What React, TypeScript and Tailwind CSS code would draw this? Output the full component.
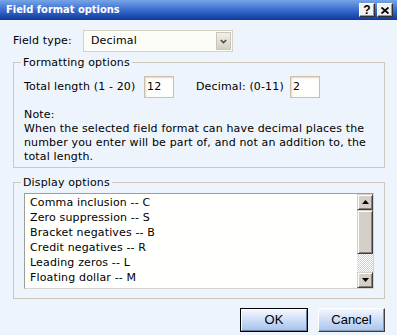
import React from "react";

function ScrollBtn({ dir }: { dir: "up" | "down" }) {
  return (
    <div className="h-[16px] w-[16px] flex items-center justify-center bg-[#d4d0c8] border border-t-[#d4d0c8] border-l-[#d4d0c8] border-r-[#404040] border-b-[#404040] shadow-[inset_1px_1px_#ffffff,inset_-1px_-1px_#808080]">
      <svg width="7" height="4" viewBox="0 0 7 4">
        {dir === "up" ? (
          <path d="M3.5 0 L7 4 L0 4 Z" fill="#000" />
        ) : (
          <path d="M0 0 L7 0 L3.5 4 Z" fill="#000" />
        )}
      </svg>
    </div>
  );
}

const items = [
  "Comma inclusion -- C",
  "Zero suppression -- S",
  "Bracket negatives -- B",
  "Credit negatives -- R",
  "Leading zeros -- L",
  "Floating dollar -- M",
  "Non-floating dollar -- N",
];

export default function App() {
  return (
    <div className="w-[397px] h-[335px] overflow-hidden bg-[#eef4fc] flex flex-col font-['DejaVu_Sans',sans-serif] text-[11px] tracking-[0.15px] text-black">
      {/* Title bar */}
      <div className="h-[20px] flex items-center pl-[6px] pr-[4px] bg-gradient-to-b from-[#78a5e8] via-[#3a6cce] to-[#0b389c]">
        <span className="flex-1 font-['DejaVu_Sans_Condensed','DejaVu_Sans',sans-serif] font-bold text-[11px] tracking-normal text-white leading-[20px] whitespace-nowrap">
          Field format options
        </span>
        <div className="flex gap-[2px]">
          <div className="w-[16px] h-[14px] flex items-center justify-center bg-[#f2f2f2] border border-t-white border-l-white border-r-[#303030] border-b-[#303030] shadow-[inset_-1px_-1px_#9a9a9a] font-['Liberation_Sans',sans-serif] font-bold text-[12px] leading-none tracking-normal">
            ?
          </div>
          <div className="w-[16px] h-[14px] flex items-center justify-center bg-[#f2f2f2] border border-t-white border-l-white border-r-[#303030] border-b-[#303030] shadow-[inset_-1px_-1px_#9a9a9a]">
            <svg width="8" height="7" viewBox="0 0 8 7">
              <path d="M0.5 0.5 L7.5 6.5 M7.5 0.5 L0.5 6.5" stroke="#000" strokeWidth="1.8" />
            </svg>
          </div>
        </div>
      </div>

      <div className="pl-[13px] pr-[12px] flex flex-col">
        {/* Field type */}
        <div className="mt-[10px] flex items-center h-[22px]">
          <span className="w-[70px] whitespace-nowrap">Field type:</span>
          <div className="w-[150px] h-[22px] border border-[#d6d1c4] bg-[#fdfdf8] flex items-center pl-[7px] pr-[1px]">
            <span className="flex-1">Decimal</span>
            <div className="w-[15px] h-[18px] flex items-center justify-center border border-[#c9c5b9] bg-gradient-to-b from-[#f1f0ea] to-[#d3cfc3]">
              <svg width="7" height="5" viewBox="0 0 7 5">
                <path d="M0.8 1 L3.5 3.6 L6.2 1" stroke="#4a4a4a" strokeWidth="1.6" fill="none" />
              </svg>
            </div>
          </div>
        </div>

        {/* Formatting options */}
        <fieldset className="mt-[4px] border border-[#cdc8bc] px-[10px] pb-[3px]">
          <legend className="-ml-[3px] px-[2px] leading-[13px]">Formatting options</legend>
          <div className="mt-[7px] flex items-center h-[22px]">
            <span className="w-[120px] whitespace-nowrap">Total length (1 - 20)</span>
            <div className="w-[30px] h-[22px] border border-[#cbbfae] bg-[#fffffc] shadow-[inset_1px_1px_2px_rgba(120,100,70,0.25)] flex items-center pl-[2px]">
              12
            </div>
            <span className="ml-[22px] w-[94px] whitespace-nowrap">Decimal: (0-11)</span>
            <div className="w-[30px] h-[22px] border border-[#cbbfae] bg-[#fffffc] shadow-[inset_1px_1px_2px_rgba(120,100,70,0.25)] flex items-center pl-[2px]">
              2
            </div>
          </div>
          <div className="mt-[10px] leading-[14px] whitespace-nowrap">
            <div>Note:</div>
            <div>When the selected field format can have decimal places the</div>
            <div>number you enter will be part of, and not an addition to, the</div>
            <div>total length.</div>
          </div>
        </fieldset>

        {/* Display options */}
        <fieldset className="mt-[8px] border border-[#cdc8bc] px-[10px] pb-[9px]">
          <legend className="-ml-[3px] px-[2px] leading-[13px]">Display options</legend>
          <div className="mt-[4px] h-[96px] flex border border-t-[#a09d96] border-l-[#a09d96] border-r-[#d8d4cc] border-b-[#d8d4cc] bg-[#fffffd]">
            <div className="flex-1 overflow-hidden pl-[5px] pt-[1px] leading-[15px] whitespace-nowrap">
              {items.map((t) => (
                <div key={t}>{t}</div>
              ))}
            </div>
            <div className="w-[16px] flex flex-col">
              <ScrollBtn dir="up" />
              <div className="h-[44px] bg-[#d4d0c8] border border-t-[#d4d0c8] border-l-[#d4d0c8] border-r-[#404040] border-b-[#404040] shadow-[inset_1px_1px_#ffffff,inset_-1px_-1px_#808080]" />
              <div className="flex-1 bg-[repeating-conic-gradient(#ffffff_0_25%,#d4d0c8_0_50%)] bg-[length:2px_2px]" />
              <ScrollBtn dir="down" />
            </div>
          </div>
        </fieldset>

        {/* Buttons */}
        <div className="mt-[9px] flex justify-end gap-[10px] font-['Liberation_Sans',sans-serif] text-[13px] tracking-normal">
          <div className="w-[68px] h-[24px] border border-black">
            <div className="w-full h-full flex items-center justify-center border border-t-[#ffffff] border-l-[#ffffff] border-r-[#6d7f99] border-b-[#6d7f99] bg-gradient-to-b from-[#f3f7fe] to-[#a7c4ee]">
              OK
            </div>
          </div>
          <div className="w-[67px] h-[24px] flex items-center justify-center border border-t-[#ffffff] border-l-[#ffffff] border-r-[#404040] border-b-[#404040] shadow-[inset_-1px_-1px_#8a9ab3] bg-gradient-to-b from-[#f3f7fe] to-[#a7c4ee]">
            Cancel
          </div>
        </div>
      </div>
    </div>
  );
}
